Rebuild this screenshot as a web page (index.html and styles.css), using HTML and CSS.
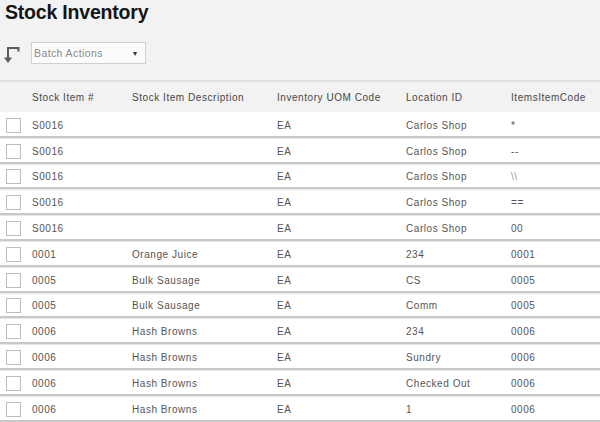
FILE: index.html
```html
<!DOCTYPE html>
<html>
<head>
<meta charset="utf-8">
<link rel="stylesheet" href="styles.css">
</head>
<body>
<div class="top">
  <h1 class="title">Stock Inventory</h1>
  <div class="toolbar">
    <svg class="batch-icon" width="18" height="20" viewBox="0 0 18 20">
      <path d="M5 3 H15.5 V6.5" fill="none" stroke="#5a5a5a" stroke-width="2"/>
      <path d="M5 2 V13" fill="none" stroke="#5a5a5a" stroke-width="2"/>
      <path d="M1 12.5 H9 L5 18 Z" fill="#5a5a5a"/>
    </svg>
    <div class="select">
      <span class="select-label">Batch Actions</span>
      <span class="caret">&#9662;</span>
    </div>
  </div>
</div>
<div class="grid">
  <div class="row head">
    <div></div>
    <div>Stock Item #</div>
    <div>Stock Item Description</div>
    <div>Inventory UOM Code</div>
    <div>Location ID</div>
    <div>ItemsItemCode</div>
  </div>
  <div class="row first"><div><span class="cb"></span></div><div>S0016</div><div></div><div>EA</div><div>Carlos Shop</div><div>*</div></div>
  <div class="row"><div><span class="cb"></span></div><div>S0016</div><div></div><div>EA</div><div>Carlos Shop</div><div>--</div></div>
  <div class="row"><div><span class="cb"></span></div><div>S0016</div><div></div><div>EA</div><div>Carlos Shop</div><div class="faint">\\</div></div>
  <div class="row"><div><span class="cb"></span></div><div>S0016</div><div></div><div>EA</div><div>Carlos Shop</div><div>==</div></div>
  <div class="row"><div><span class="cb"></span></div><div>S0016</div><div></div><div>EA</div><div>Carlos Shop</div><div>00</div></div>
  <div class="row"><div><span class="cb"></span></div><div>0001</div><div>Orange Juice</div><div>EA</div><div>234</div><div>0001</div></div>
  <div class="row"><div><span class="cb"></span></div><div>0005</div><div>Bulk Sausage</div><div>EA</div><div>CS</div><div>0005</div></div>
  <div class="row"><div><span class="cb"></span></div><div>0005</div><div>Bulk Sausage</div><div>EA</div><div>Comm</div><div>0005</div></div>
  <div class="row"><div><span class="cb"></span></div><div>0006</div><div>Hash Browns</div><div>EA</div><div>234</div><div>0006</div></div>
  <div class="row"><div><span class="cb"></span></div><div>0006</div><div>Hash Browns</div><div>EA</div><div>Sundry</div><div>0006</div></div>
  <div class="row"><div><span class="cb"></span></div><div>0006</div><div>Hash Browns</div><div>EA</div><div>Checked Out</div><div>0006</div></div>
  <div class="row"><div><span class="cb"></span></div><div>0006</div><div>Hash Browns</div><div>EA</div><div>1</div><div>0006</div></div>
</div>
</body>
</html>
```
FILE: styles.css
```css
html, body {
  margin: 0;
  padding: 0;
  background: #ffffff;
  font-family: "Liberation Sans", Arial, sans-serif;
  overflow: hidden;
}

.top {
  background: #f2f2f2;
  height: 80px;
  border-bottom: 2px solid #e0e0e0;
  box-sizing: content-box;
}

.title {
  margin: 0;
  padding: 0 0 0 5px;
  height: 25px;
  font-size: 19.5px;
  line-height: 25px;
  font-weight: bold;
  color: #151515;
  letter-spacing: -0.2px;
}

.toolbar {
  display: flex;
  align-items: center;
  margin-top: 17px;
  padding-left: 3px;
  height: 22px;
}

.batch-icon {
  display: block;
  margin-top: 3px;
}

.select {
  margin-left: 10px;
  width: 103px;
  height: 20px;
  border: 1px solid #cfcfcf;
  background: #fbfbfb;
  display: flex;
  align-items: center;
  justify-content: space-between;
  padding: 0 8px 0 2px;
  box-sizing: content-box;
}

.select-label {
  font-size: 10.5px;
  letter-spacing: 0.4px;
  color: #8a8a8a;
}

.caret {
  font-size: 8px;
  color: #333;
  margin-top: 1px;
}

.grid {
  display: flex;
  flex-direction: column;
}

.row {
  display: grid;
  grid-template-columns: 32px 100px 145px 129px 105px 1fr;
  align-items: center;
  height: 25.8px;
  box-sizing: border-box;
  background: #ffffff;
  border-top: 1px solid #e6e6e6;
  border-bottom: 2px solid #c8c8c8;
  padding-top: 2px;
  font-size: 10px;
  letter-spacing: 0.55px;
  color: #555555;
}

.row > div {
  white-space: nowrap;
}

.row.head {
  height: 30px;
  background: #f2f2f2;
  border: none;
  color: #474747;
  padding-top: 1px;
}

.row.first {
  border-top: none;
  padding-top: 4px;
}

.cb {
  display: block;
  width: 13px;
  height: 13px;
  margin-left: 6px;
  border: 1px solid #bdbdbd;
  background: #fff;
}

.faint {
  color: #999;
}
```
